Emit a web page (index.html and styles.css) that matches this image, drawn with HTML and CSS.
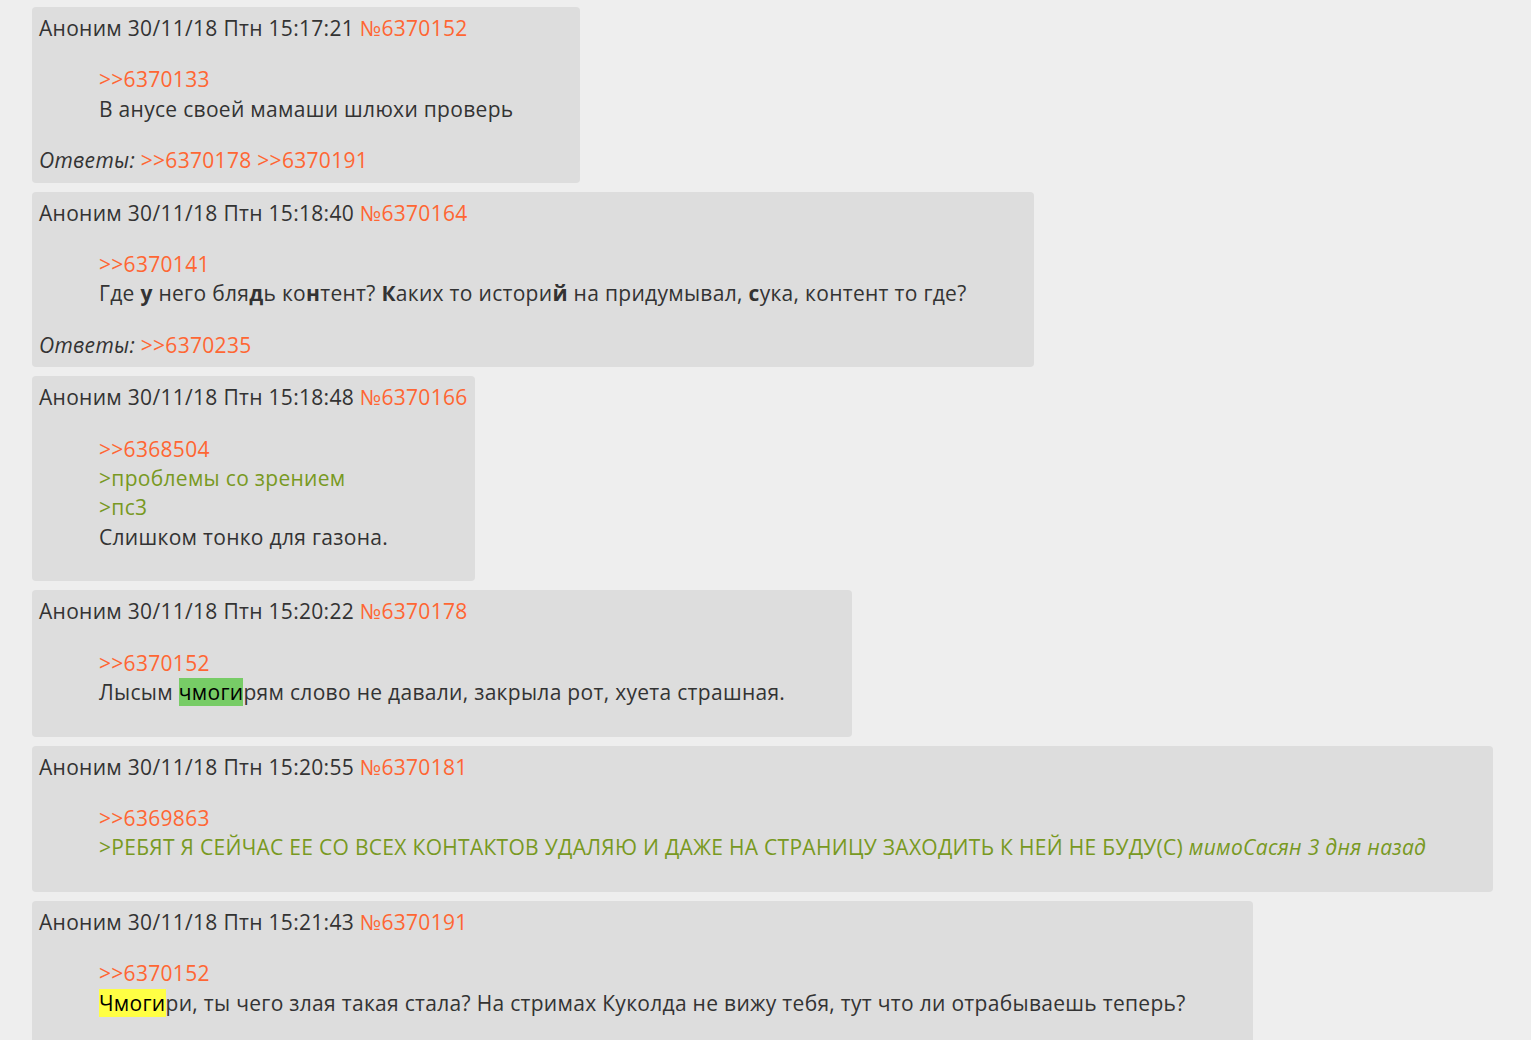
FILE: index.html
```html
<!DOCTYPE html>
<html lang="ru">
<head>
    <meta charset="UTF-8">
    <meta name="viewport" content="width=device-width, initial-scale=1.0">
    <title>Тред</title>
    <link rel="stylesheet" href="styles.css">
</head>
<body>

<div class="thread">

    <div class="post">
        <div class="post-head">Аноним 30/11/18 Птн 15:17:21 <a class="post-num" href="#">№6370152</a></div>
        <blockquote class="msg">
            <a class="reply" href="#">&gt;&gt;6370133</a><br>
            В анусе своей мамаши шлюхи проверь
        </blockquote>
        <div class="answers"><em>Ответы:</em> <a class="reply" href="#">&gt;&gt;6370178</a> <a class="reply" href="#">&gt;&gt;6370191</a></div>
    </div>

    <div class="post">
        <div class="post-head">Аноним 30/11/18 Птн 15:18:40 <a class="post-num" href="#">№6370164</a></div>
        <blockquote class="msg">
            <a class="reply" href="#">&gt;&gt;6370141</a><br>
            Где <b>у</b> него бля<b>д</b>ь ко<b>н</b>тент? <b>К</b>аких то истори<b>й</b> на придумывал, <b>с</b>ука, контент то где?
        </blockquote>
        <div class="answers"><em>Ответы:</em> <a class="reply" href="#">&gt;&gt;6370235</a></div>
    </div>

    <div class="post">
        <div class="post-head">Аноним 30/11/18 Птн 15:18:48 <a class="post-num" href="#">№6370166</a></div>
        <blockquote class="msg">
            <a class="reply" href="#">&gt;&gt;6368504</a><br>
            <span class="quote">&gt;проблемы со зрением</span><br>
            <span class="quote">&gt;пс3</span><br>
            Слишком тонко для газона.
        </blockquote>
    </div>

    <div class="post">
        <div class="post-head">Аноним 30/11/18 Птн 15:20:22 <a class="post-num" href="#">№6370178</a></div>
        <blockquote class="msg">
            <a class="reply" href="#">&gt;&gt;6370152</a><br>
            Лысым <span class="hl-green">чмоги</span>рям слово не давали, закрыла рот, хуета страшная.
        </blockquote>
    </div>

    <div class="post">
        <div class="post-head">Аноним 30/11/18 Птн 15:20:55 <a class="post-num" href="#">№6370181</a></div>
        <blockquote class="msg">
            <a class="reply" href="#">&gt;&gt;6369863</a><br>
            <span class="quote">&gt;РЕБЯТ Я СЕЙЧАС ЕЕ СО ВСЕХ КОНТАКТОВ УДАЛЯЮ И ДАЖЕ НА СТРАНИЦУ ЗАХОДИТЬ К НЕЙ НЕ БУДУ(С) <em>мимоСасян 3 дня назад</em></span>
        </blockquote>
    </div>

    <div class="post">
        <div class="post-head">Аноним 30/11/18 Птн 15:21:43 <a class="post-num" href="#">№6370191</a></div>
        <blockquote class="msg">
            <a class="reply" href="#">&gt;&gt;6370152</a><br>
            <span class="hl-yellow">Чмоги</span>ри, ты чего злая такая стала? На стримах Куколда не вижу тебя, тут что ли отрабываешь теперь?
        </blockquote>
    </div>

</div>

</body>
</html>
```

FILE: styles.css
```css
body {
    margin: 0;
    padding: 7px 0 0 32px;
    background: #eeeeee;
    color: #333333;
    font-family: "Open Sans", "Noto Sans", sans-serif;
    font-size: 21px;
    line-height: 29.4px;
    letter-spacing: 0.3px;
}

a {
    color: #ff6633;
    text-decoration: none;
}

.thread {
    display: flex;
    flex-direction: column;
    align-items: flex-start;
    gap: 9px;
}

.post {
    background: #dddddd;
    border-radius: 4px;
    padding: 7px;
    white-space: nowrap;
}

.msg {
    margin: 22px 60px;
}

.msg b {
    font-weight: bold;
}

.quote {
    color: #789922;
}

.hl-green {
    background: #77cc66;
    color: #000000;
}

.hl-yellow {
    background: #ffff44;
    color: #000000;
}

.answers em {
    font-style: italic;
}
```
